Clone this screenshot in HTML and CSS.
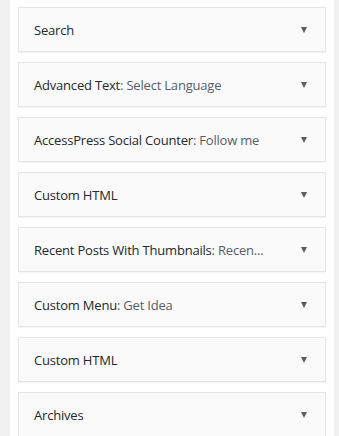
FILE: index.html
```html
<!DOCTYPE html>
<html lang="en">
<head>
    <meta charset="UTF-8">
    <meta name="viewport" content="width=device-width, initial-scale=1.0">
    <title>Widgets</title>
    <link rel="stylesheet" href="styles.css">
</head>
<body>
    <div class="sidebar">
        <div class="widget"><span class="title">Search</span><span class="arrow"></span></div>
        <div class="widget"><span class="title">Advanced Text<span class="sub">: Select Language</span></span><span class="arrow"></span></div>
        <div class="widget"><span class="title">AccessPress Social Counter<span class="sub">: Follow me</span></span><span class="arrow"></span></div>
        <div class="widget"><span class="title">Custom HTML</span><span class="arrow"></span></div>
        <div class="widget"><span class="title">Recent Posts With Thumbnails<span class="sub">: Recen...</span></span><span class="arrow"></span></div>
        <div class="widget"><span class="title">Custom Menu<span class="sub">: Get Idea</span></span><span class="arrow"></span></div>
        <div class="widget"><span class="title">Custom HTML</span><span class="arrow"></span></div>
        <div class="widget"><span class="title">Archives</span><span class="arrow"></span></div>
    </div>
</body>
</html>
```

FILE: styles.css
```css
body {
    margin: 0;
    background-color: #f1f1f1;
    font-family: "Open Sans", sans-serif;
    height: 436px;
    overflow: hidden;
}

.sidebar {
    margin-left: 10px;
    width: 308px;
    min-height: 436px;
    padding: 7px 8px 0 8px;
    background-color: #fff;
}

.widget {
    display: flex;
    align-items: center;
    justify-content: space-between;
    height: 43px;
    margin-bottom: 10px;
    padding: 0 18px 0 15px;
    background-color: #fafafa;
    border: 1px solid #e5e5e5;
    box-shadow: 0 1px 1px rgba(0, 0, 0, 0.04);
}

.title {
    font-size: 13px;
    letter-spacing: -0.2px;
    color: #23282d;
    white-space: nowrap;
}

.sub { color: #555d66; }

.arrow {
    width: 0;
    height: 0;
    border-left: 3.5px solid transparent;
    border-right: 3.5px solid transparent;
    border-top: 6px solid #555d66;
}
```
